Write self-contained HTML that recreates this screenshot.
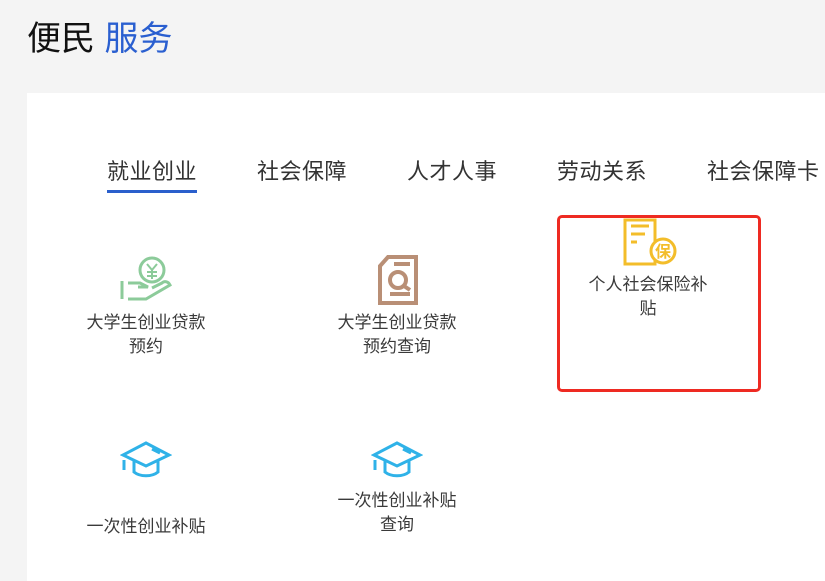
<!DOCTYPE html>
<html><head><meta charset="utf-8"><style>
body{margin:0;width:825px;height:581px;background:#f4f4f4;font-family:"Liberation Sans","Noto Sans CJK SC",sans-serif;position:relative;overflow:hidden}
.t{position:absolute;left:27px;top:16px;font-size:34px;color:#111;line-height:46px}
.t span{color:#2a5fd0}
.p{position:absolute;left:27px;top:93px;right:0;bottom:0;background:#fff}
.tab{position:absolute;top:157px;font-size:22px;color:#333;line-height:30px;white-space:nowrap;letter-spacing:0.5px}
.ul{position:absolute;left:107px;top:190px;width:90px;height:3px;background:#2a5fcc}
.lb{position:absolute;width:200px;text-align:center;font-size:17px;color:#3a3a3a;line-height:24px}
svg{position:absolute}
.red{position:absolute;left:557px;top:215px;width:198px;height:171px;border:3px solid #ee2a22;border-radius:5px}
</style></head><body>
<div class="t">便民 <span>服务</span></div>
<div class="p"></div>
<div class="tab" style="left:107px">就业创业</div>
<div class="tab" style="left:257px">社会保障</div>
<div class="tab" style="left:407px">人才人事</div>
<div class="tab" style="left:557px">劳动关系</div>
<div class="tab" style="left:707px">社会保障卡</div>
<div class="ul"></div>

<svg style="left:118px;top:255px" width="56" height="48" viewBox="0 0 56 48" fill="none" stroke="#8ccb9a" stroke-width="3">
<circle cx="34" cy="15" r="12"/>
<path d="M29 9l5 6 5-6M34 15v9M29 17h10M29 21h10" stroke-width="2"/>
<path d="M4 26v18M10 28h12l8 4h-10M10 44h18l24-14c-2-4-6-4-8-2l-10 5"/>
</svg>
<div class="lb" style="left:46px;top:311px">大学生创业贷款<br>预约</div>

<svg style="left:376px;top:254px" width="44" height="52" viewBox="0 0 44 52" fill="none" stroke="#b98f76" stroke-width="4">
<path d="M12 3h28v46H4V12z"/>
<circle cx="22" cy="26" r="8"/>
<path d="M18 10h16M14 40h20M28 32l6 4"/>
</svg>
<div class="lb" style="left:297px;top:311px">大学生创业贷款<br>预约查询</div>

<svg style="left:622px;top:218px" width="56" height="50" viewBox="0 0 56 50" fill="none" stroke="#f3bd2a" stroke-width="3">
<path d="M3 2h30v44H3z"/>
<path d="M9 8h18M9 16h14M9 24h6" />
<circle cx="41" cy="33" r="12" fill="#fff"/>
<text x="33" y="39" font-size="16" font-weight="bold" fill="#f3bd2a" stroke="none" font-family="Noto Sans CJK SC">保</text>
</svg>
<div class="lb" style="left:548px;top:273px">个人社会保险补<br>贴</div>
<div class="red"></div>

<svg style="left:120px;top:440px" width="52" height="38" viewBox="0 0 52 38" fill="none" stroke="#2fb2e8" stroke-width="3">
<path d="M26 3L49 15 26 26 3 15z"/>
<path d="M14 20v12c6 5 18 5 24 0V20M4 20v10M32 9l8 4" />
</svg>
<div class="lb" style="left:46px;top:515px">一次性创业补贴</div>

<svg style="left:371px;top:440px" width="52" height="38" viewBox="0 0 52 38" fill="none" stroke="#2fb2e8" stroke-width="3">
<path d="M26 3L49 15 26 26 3 15z"/>
<path d="M14 20v12c6 5 18 5 24 0V20M4 20v10M32 9l8 4" />
</svg>
<div class="lb" style="left:297px;top:489px">一次性创业补贴<br>查询</div>
</body></html>
